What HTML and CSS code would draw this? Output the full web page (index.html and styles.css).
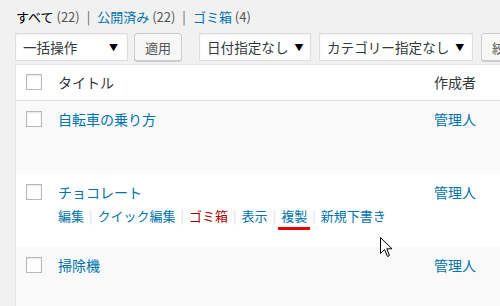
FILE: index.html
```html
<!DOCTYPE html>
<html lang="ja">
<head>
  <meta charset="UTF-8" />
  <meta name="viewport" content="width=device-width, initial-scale=1.0" />
  <title>投稿一覧</title>
  <link rel="stylesheet" href="styles.css">
</head>
<body>

  <div class="wrap">
    <!-- status links -->
    <ul class="subsubsub">
      <li><a class="current" href="#">すべて <span class="count">(22)</span></a></li>
      <li class="sep">|</li>
      <li><a href="#">公開済み <span class="count">(22)</span></a></li>
      <li class="sep">|</li>
      <li><a href="#">ゴミ箱 <span class="count">(4)</span></a></li>
    </ul>

    <!-- filters -->
    <div class="tablenav">
      <div class="fake-select bulk">一括操作<span class="arrow">▼</span></div>
      <button class="btn apply">適用</button>
      <div class="fake-select date">日付指定なし<span class="arrow">▼</span></div>
      <div class="fake-select cat">カテゴリー指定なし<span class="arrow">▼</span></div>
      <button class="btn filter">絞り込み検索</button>
    </div>

    <div class="posts">
      <div class="row head">
        <div class="check"><span class="box"></span></div>
        <div class="title-col">タイトル</div>
        <div class="author-col">作成者</div>
      </div>

      <div class="row alt">
        <div class="check"><span class="box"></span></div>
        <div class="title-col">
          <a class="post-title" href="#">自転車の乗り方</a>
        </div>
        <div class="author-col"><a href="#">管理人</a></div>
      </div>

      <div class="row">
        <div class="check"><span class="box"></span></div>
        <div class="title-col">
          <a class="post-title" href="#">チョコレート</a>
          <div class="row-actions">
            <a href="#">編集</a><span class="bar">|</span>
            <a href="#">クイック編集</a><span class="bar">|</span>
            <a class="trash" href="#">ゴミ箱</a><span class="bar">|</span>
            <a href="#">表示</a><span class="bar">|</span>
            <a class="marked" href="#">複製</a><span class="bar">|</span>
            <a href="#">新規下書き</a>
          </div>
        </div>
        <div class="author-col"><a href="#">管理人</a></div>
      </div>

      <div class="row alt">
        <div class="check"><span class="box"></span></div>
        <div class="title-col">
          <a class="post-title" href="#">掃除機</a>
        </div>
        <div class="author-col"><a href="#">管理人</a></div>
      </div>
    </div>
  </div>

  <!-- mouse pointer -->
  <svg class="pointer" width="13" height="22" viewBox="0 0 13 22">
    <path d="M0.5 0.5 L0.5 16.5 L4.5 12.5 L7.5 19.5 L9.5 18.5 L6.8 11.8 L12 11.8 Z" fill="#fff" stroke="#000" stroke-width="1"/>
  </svg>

</body>
</html>
```

FILE: styles.css
```css
html, body {
  margin: 0;
  padding: 0;
  width: 100%;
  height: 100%;
  overflow: hidden;
  background: #f1f1f1;
  font-family: "Noto Sans CJK JP", "Noto Sans", sans-serif;
  color: #32373c;
}

a {
  color: #0073aa;
  text-decoration: none;
}

.wrap {
  width: 640px;
  padding: 8px 0 0 15px;
}

.subsubsub {
  list-style: none;
  margin: 0 0 0 1px;
  padding: 0;
  display: flex;
  font-size: 13px;
  line-height: 18px;
  height: 18px;
  color: #666;
}

.subsubsub .current {
  color: #000;
}

.subsubsub .count {
  color: #555;
}

.subsubsub .sep {
  padding: 0 7px;
  color: #666;
}

.tablenav {
  display: flex;
  align-items: center;
  margin-top: 7px;
  height: 28px;
}

.fake-select {
  box-sizing: border-box;
  height: 28px;
  display: flex;
  align-items: center;
  justify-content: space-between;
  padding: 0 9px 0 7px;
  background: #fff;
  border: 1px solid #ddd;
  box-shadow: inset 0 1px 2px rgba(0, 0, 0, 0.07);
  font-size: 13.6px;
  color: #32373c;
  white-space: nowrap;
}

.fake-select .arrow {
  font-size: 9px;
  color: #000;
  margin-left: 6px;
}

.bulk { width: 113px; }
.date { width: 112px; margin-left: 17px; }
.cat { width: 154px; margin-left: 8px; }

.btn {
  box-sizing: border-box;
  height: 28px;
  padding: 0 10px;
  background: #f7f7f7;
  border: 1px solid #ccc;
  border-radius: 3px;
  box-shadow: 0 1px 0 #ccc;
  font-family: inherit;
  font-size: 13px;
  color: #555;
  white-space: nowrap;
}

.apply {
  width: 48px;
  margin-left: 6px;
  padding: 0;
}

.filter {
  margin-left: 8px;
}

.posts {
  margin-top: 3px;
  width: 620px;
  background: #fff;
  border: 1px solid #e5e5e5;
  box-shadow: 0 1px 1px rgba(0, 0, 0, 0.04);
}

.row {
  display: grid;
  grid-template-columns: 42px 376px 1fr;
  height: 73px;
  box-sizing: border-box;
  padding-top: 9px;
  font-size: 14px;
  line-height: 18px;
}

.row.alt {
  background: #f9f9f9;
}

.row.head {
  height: 36px;
  padding-top: 8px;
  border-bottom: 1px solid #e1e1e1;
}

.check {
  padding: 1px 0 0 10px;
}

.head .check {
  padding-top: 1px;
}

.box {
  display: block;
  box-sizing: border-box;
  width: 16px;
  height: 16px;
  background: #fff;
  border: 1px solid #b4b9be;
  box-shadow: inset 0 1px 2px rgba(0, 0, 0, 0.1);
}

.post-title {
  display: block;
}

.row-actions {
  margin-top: 6px;
  font-size: 13px;
  line-height: 18px;
  display: flex;
  white-space: nowrap;
}

.row-actions .bar {
  color: #ddd;
  padding: 0 5px;
}

.row-actions .trash {
  color: #a00;
}

.row-actions .marked {
  border-bottom: 3px solid #e00;
  padding: 0 3px;
  margin: 0 -3px;
  height: 20px;
}

.author-col {
  font-size: 14px;
}

.pointer {
  position: absolute;
  left: 380px;
  top: 237px;
}
```
